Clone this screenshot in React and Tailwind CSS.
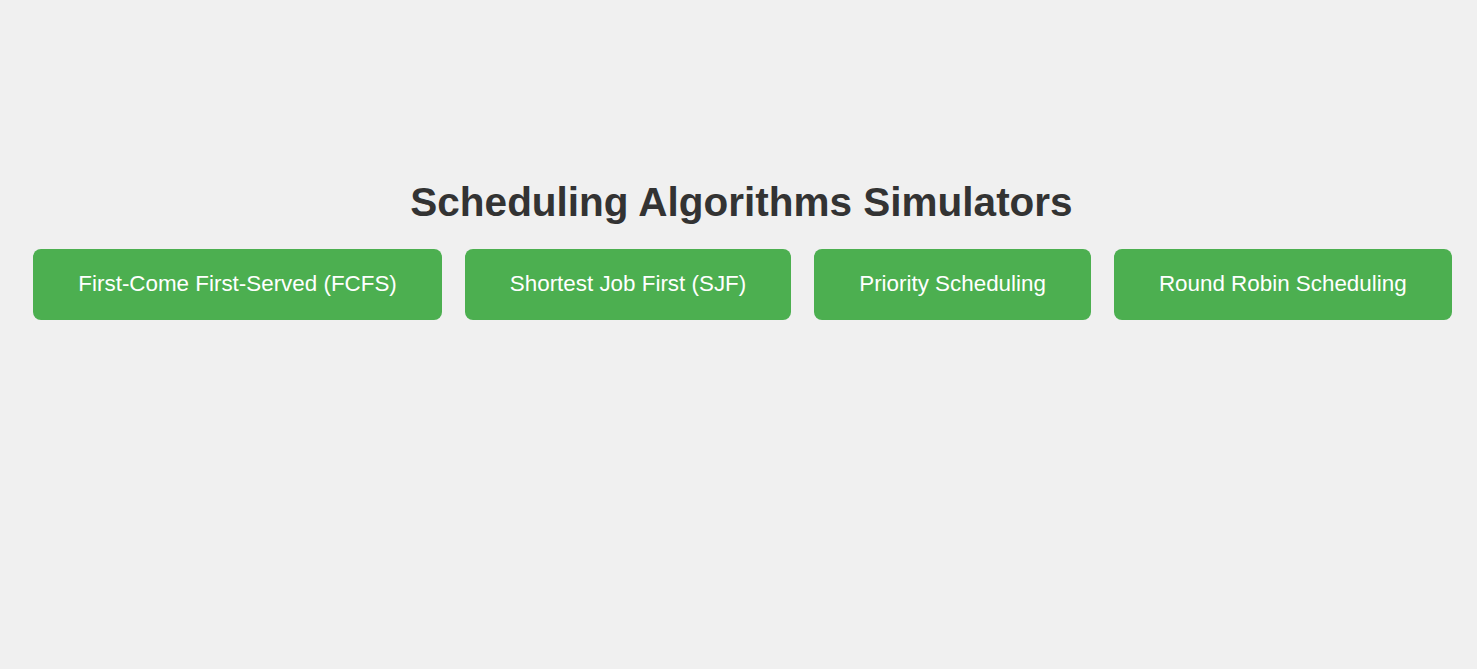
export default function App() {
  const algorithms = [
    "First-Come First-Served (FCFS)",
    "Shortest Job First (SJF)",
    "Priority Scheduling",
    "Round Robin Scheduling",
  ];

  return (
    <div className="min-h-screen bg-[#f0f0f0] pt-[179px] font-['Liberation_Sans',Arial,sans-serif]">
      <h1 className="pl-[6px] text-center text-[40.5px] leading-[46px] font-bold text-[#333333]">
        Scheduling Algorithms Simulators
      </h1>
      <div className="mt-[24px] flex justify-center gap-[23px] pl-[8px]">
        {algorithms.map((name) => (
          <button
            key={name}
            className="h-[71px] rounded-[8px] bg-[#4caf50] px-[45px] pb-[2px] text-[22.4px] text-white"
          >
            {name}
          </button>
        ))}
      </div>
    </div>
  );
}
